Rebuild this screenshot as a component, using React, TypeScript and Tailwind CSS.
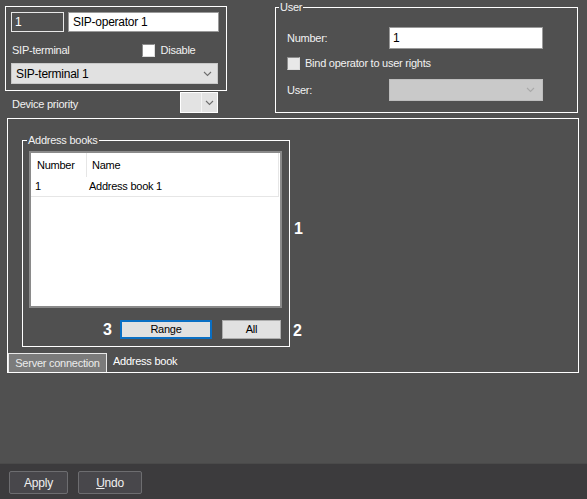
import React from "react";

const font = { fontFamily: '"Liberation Sans", Arial, sans-serif' };

function Chevron({ color = "#6e6e6e" }: { color?: string }) {
  return (
    <svg width="9" height="6" viewBox="0 0 9 6" fill="none">
      <polyline points="1,1 4.5,4.5 8,1" stroke={color} strokeWidth="1.1" />
    </svg>
  );
}

function Checkbox({ bg = "bg-white" }: { bg?: string }) {
  return <div className={`w-[13px] h-[13px] ${bg} border border-[#8c8c8c] border-r-[#dcdcdc] border-b-[#dcdcdc]`} />;
}

export default function App() {
  return (
    <div
      style={font}
      className="w-[587px] h-[499px] bg-[#505050] flex flex-col text-[11px] tracking-[-0.25px] text-[#f2f2f2] overflow-hidden"
    >
      {/* top row */}
      <div className="flex items-start pl-[5px] pt-[6px]">
        <div className="w-[222px] flex flex-col">
          <div className="border border-white h-[85px] px-[5px] pt-[5px] flex flex-col">
            <div className="flex gap-[4px]">
              <div className="w-[53px] h-[20px] border border-[#e8e8e8] flex items-center pl-[3px] text-[12px] text-white">
                1
              </div>
              <div className="w-[151px] h-[20px] bg-white border border-[#9a9a9a] flex items-center pl-[4px] text-[12px] text-black">
                SIP-operator 1
              </div>
            </div>
            <div className="h-[31px] pt-[5px] flex items-center pl-[1px]">
              <span>SIP-terminal</span>
              <div className="ml-[72px] flex items-center gap-[6px]">
                <Checkbox />
                <span>Disable</span>
              </div>
            </div>
            <div className="w-[207px] h-[21px] bg-[#e1e1e1] border border-[#c8c8c8] flex items-center justify-between pl-[4px] pr-[5px] text-[12px] text-black">
              <span>SIP-terminal 1</span>
              <Chevron />
            </div>
          </div>
          <div className="mt-[1px] h-[21px] flex items-center justify-between pl-[7px] pr-[9px]">
            <span className="pt-[4px]">Device priority</span>
            <div className="w-[38px] h-[21px] border border-white bg-[#e3e3e3] flex justify-end">
              <div className="w-[16px] h-full border-l border-[#f4f4f4] flex items-center justify-center">
                <Chevron />
              </div>
            </div>
          </div>
        </div>

        <fieldset className="ml-[48px] -mt-[5px] w-[303px] border border-white pl-[11px] pt-[13px] pb-[11px]">
          <legend className="-ml-[8px] px-[1px] leading-[13px]">User</legend>
          <div className="flex items-center h-[22px]">
            <span className="w-[102px]">Number:</span>
            <div className="w-[154px] h-[22px] bg-white border border-[#9a9a9a] flex items-center pl-[3px] text-[12px] text-black">
              1
            </div>
          </div>
          <div className="mt-[4px] h-[20px] flex items-center gap-[5px]">
            <Checkbox bg="bg-[#e8e8e8]" />
            <span>Bind operator to user rights</span>
          </div>
          <div className="mt-[6px] flex items-center h-[22px]">
            <span className="w-[102px]">User:</span>
            <div className="w-[154px] h-[22px] bg-[#c9c9c9] border border-[#bdbdbd] flex items-center justify-end pr-[7px]">
              <Chevron color="#a9a9a9" />
            </div>
          </div>
        </fieldset>
      </div>

      {/* main panel */}
      <div className="relative mt-[5px] ml-[7px] w-[572px] h-[255px] border border-white flex flex-col">
        <div className="pl-[14px] pt-[15px]">
          <fieldset className="w-[268px] border border-white pl-[6px] pt-[4px] pb-[7px]">
            <legend className="-ml-[2px] px-[1px] leading-[13px]">Address books</legend>
            <div className="w-[253px] h-[157px] bg-white border-2 border-[#8a8a8a] text-black flex flex-col">
              <div className="flex h-[24px] mr-[1px] border-r border-[#e6e6e6]">
                <div className="w-[56px] h-full flex items-center pl-[6px] border-r border-[#e6e6e6]">Number</div>
                <div className="flex-1 h-full flex items-center pl-[5px]">Name</div>
              </div>
              <div className="flex h-[20px] mr-[1px] border-r border-b border-[#e6e6e6]">
                <div className="w-[56px] h-full flex items-center pl-[4px]">1</div>
                <div className="flex-1 h-full flex items-center pl-[2px]">Address book 1</div>
              </div>
            </div>
            <div className="mt-[12px] h-[19px] flex items-center justify-end w-[253px] pr-[1px]">
              <span className="text-[16px] leading-[18px] font-bold text-white mr-[8px] tracking-normal">3</span>
              <div className="w-[92px] h-[19px] bg-[#e1e1e1] border-2 border-[#0a6fc4] flex items-center justify-center text-black">
                Range
              </div>
              <div className="ml-[10px] w-[59px] h-[19px] bg-[#e1e1e1] border border-[#adadad] flex items-center justify-center text-black">
                All
              </div>
            </div>
          </fieldset>
        </div>
        <div className="mt-auto flex items-end">
          <div className="w-[99px] h-[19px] bg-[#7b7b7b] border-l border-t border-r border-[#e8e8e8] flex items-center justify-center text-[#ececec]">
            Server connection
          </div>
          <span className="ml-[6px] mb-[3px] text-white">Address book</span>
        </div>
        <span className="absolute left-[286px] top-[101px] text-[16px] leading-[18px] font-bold text-white">1</span>
        <span className="absolute left-[285px] top-[203px] text-[16px] leading-[18px] font-bold text-white">2</span>
      </div>

      <div className="flex-1" />

      {/* bottom bar */}
      <div className="h-[36px] bg-[#3c3b3d] border-t border-[#4a4a4a] flex items-start pl-[9px] pt-[7px] gap-[10px]">
        <div className="w-[59px] h-[23px] bg-[#48474b] border border-[#6d6d70] rounded-[2px] flex items-center justify-center text-[12px] text-[#f0f0f0]">
          Apply
        </div>
        <div className="w-[64px] h-[23px] bg-[#48474b] border border-[#6d6d70] rounded-[2px] flex items-center justify-center text-[12px] text-[#f0f0f0]">
          <span><span className="underline">U</span>ndo</span>
        </div>
      </div>
    </div>
  );
}
